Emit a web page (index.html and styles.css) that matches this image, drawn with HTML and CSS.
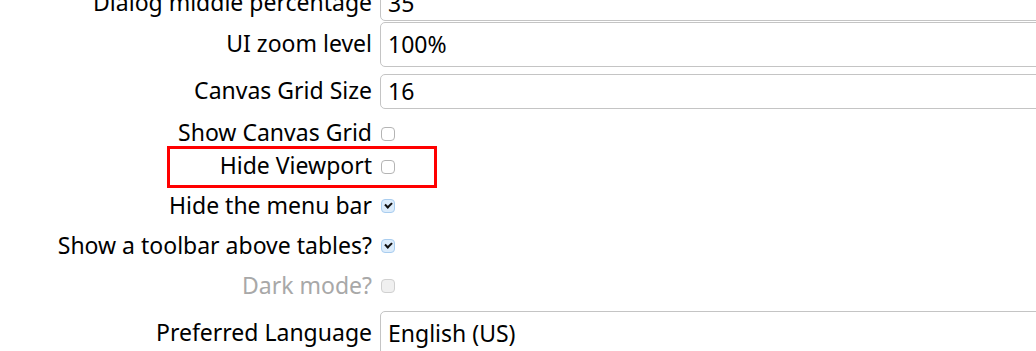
FILE: index.html
```html
<!DOCTYPE html>
<html lang="en">
<head>
  <meta charset="UTF-8">
  <meta name="viewport" content="width=device-width, initial-scale=1.0">
  <title>Settings</title>
  <link rel="stylesheet" href="styles.css">
</head>
<body>
  <div class="settings">
    <div class="row field first">
      <label class="label">Dialog middle percentage</label>
      <div class="control"><input class="text-input" value="35"></div>
    </div>
    <div class="row field tall gap-1">
      <label class="label">UI zoom level</label>
      <div class="control"><div class="select">100%</div></div>
    </div>
    <div class="row field gap-7">
      <label class="label">Canvas Grid Size</label>
      <div class="control"><input class="text-input" value="16"></div>
    </div>
    <div class="row check short gap-8">
      <label class="label">Show Canvas Grid</label>
      <div class="control"><span class="box"></span></div>
    </div>
    <div class="row check short">
      <label class="label">Hide Viewport</label>
      <div class="control"><span class="box"></span></div>
    </div>
    <div class="row check gap-3">
      <label class="label">Hide the menu bar</label>
      <div class="control"><span class="box checked"></span></div>
    </div>
    <div class="row check">
      <label class="label">Show a toolbar above tables?</label>
      <div class="control"><span class="box checked"></span></div>
    </div>
    <div class="row check disabled">
      <label class="label">Dark mode?</label>
      <div class="control"><span class="box"></span></div>
    </div>
    <div class="row field tall gap-5">
      <label class="label">Preferred Language</label>
      <div class="control"><div class="select">English (US)</div></div>
    </div>
  </div>
  <div class="highlight"></div>
</body>
</html>
```

FILE: styles.css
```css
body {
  margin: 0;
  font-family: 'Noto Sans', 'Open Sans', sans-serif;
  font-size: 23px;
  color: #000;
  background: #fff;
  overflow: hidden;
  height: 351px;
  position: relative;
}
.settings {
  display: flex;
  flex-direction: column;
}
.row {
  display: flex;
  align-items: center;
}
.label {
  width: 372px;
  text-align: right;
  white-space: nowrap;
  flex-shrink: 0;
  line-height: 1.2;
  margin-top: -1px;
}
.control {
  margin-left: 8px;
  flex: 1;
  display: flex;
  align-items: center;
}
.field {
  height: 35px;
}
.field.tall {
  height: 45px;
}
.check {
  height: 40px;
}
.check.short {
  height: 33px;
}
.first {
  margin-top: -14px;
}
.gap-1 { margin-top: 1px; }
.gap-3 { margin-top: 3px; }
.gap-5 { margin-top: 5px; }
.gap-7 { margin-top: 7px; }
.gap-8 { margin-top: 8px; }
.text-input,
.select {
  box-sizing: border-box;
  width: 720px;
  height: 100%;
  border: 1px solid #c4c4c4;
  border-radius: 5px;
  padding: 0 7px 1px;
  font: inherit;
  color: #000;
  background: #fff;
  outline: none;
}
.field .control {
  height: 100%;
}
.select {
  display: flex;
  align-items: center;
}
.box {
  display: inline-block;
  box-sizing: border-box;
  width: 14px;
  height: 14px;
  margin-left: 1px;
  border: 1px solid #b4b4b4;
  border-radius: 4px;
  background: #fff;
  position: relative;
}
.box.checked {
  background: #dcecfb;
  border-color: #a9cdef;
}
.box.checked::after {
  content: '';
  position: absolute;
  left: 3px;
  top: 2px;
  width: 5px;
  height: 3px;
  border-left: 2px solid #111;
  border-bottom: 2px solid #111;
  transform: rotate(-45deg);
}
.disabled .label {
  color: #a8a8a8;
}
.disabled .box {
  background: #f0f0f0;
  border-color: #d0d0d0;
}
.highlight {
  position: absolute;
  left: 167px;
  top: 146px;
  width: 270px;
  height: 42px;
  box-sizing: border-box;
  border: 3px solid #f00;
}
```
